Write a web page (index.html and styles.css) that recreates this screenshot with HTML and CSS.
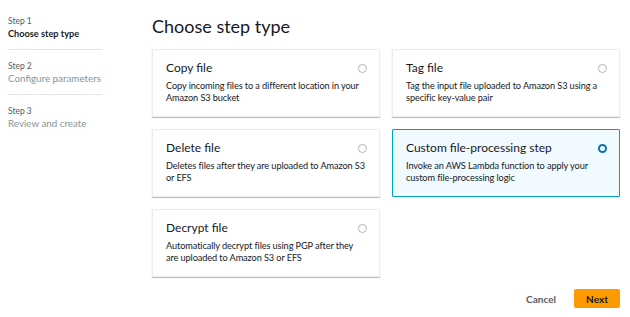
FILE: index.html
```html
<!DOCTYPE html>
<html lang="en">
<head>
    <meta charset="UTF-8">
    <meta name="viewport" content="width=device-width, initial-scale=1.0">
    <title>Choose step type</title>
    <link rel="stylesheet" href="styles.css">
</head>
<body>

    <div class="page">
        <div class="steps">
            <div class="step">
                <div class="step-label">Step 1</div>
                <div class="step-name active">Choose step type</div>
            </div>
            <div class="step">
                <div class="step-label">Step 2</div>
                <div class="step-name">Configure parameters</div>
            </div>
            <div class="step last">
                <div class="step-label">Step 3</div>
                <div class="step-name">Review and create</div>
            </div>
        </div>

        <div class="main">
            <h1>Choose step type</h1>
            <div class="tiles">
                <div class="tile">
                    <div class="tile-head">
                        <div class="tile-title">Copy file</div>
                        <span class="radio"></span>
                    </div>
                    <div class="tile-desc">Copy incoming files to a different location in your<br>Amazon S3 bucket</div>
                </div>
                <div class="tile">
                    <div class="tile-head">
                        <div class="tile-title">Tag file</div>
                        <span class="radio"></span>
                    </div>
                    <div class="tile-desc">Tag the input file uploaded to Amazon S3 using a<br>specific key-value pair</div>
                </div>
                <div class="tile">
                    <div class="tile-head">
                        <div class="tile-title">Delete file</div>
                        <span class="radio"></span>
                    </div>
                    <div class="tile-desc">Deletes files after they are uploaded to Amazon S3<br>or EFS</div>
                </div>
                <div class="tile selected">
                    <div class="tile-head">
                        <div class="tile-title">Custom file-processing step</div>
                        <span class="radio checked"></span>
                    </div>
                    <div class="tile-desc">Invoke an AWS Lambda function to apply your<br>custom file-processing logic</div>
                </div>
                <div class="tile">
                    <div class="tile-head">
                        <div class="tile-title">Decrypt file</div>
                        <span class="radio"></span>
                    </div>
                    <div class="tile-desc">Automatically decrypt files using PGP after they<br>are uploaded to Amazon S3 or EFS</div>
                </div>
            </div>

            <div class="actions">
                <button class="btn-link">Cancel</button>
                <button class="btn-primary">Next</button>
            </div>
        </div>
    </div>

</body>
</html>
```

FILE: styles.css
```css
* {
    box-sizing: border-box;
}

body {
    margin: 0;
    background-color: #fff;
    font-family: Lato, "Liberation Sans", sans-serif;
    color: #16191f;
}

.page {
    display: flex;
    padding: 0 10px 0 8px;
}

.steps {
    width: 94px;
    padding-top: 15px;
    flex-shrink: 0;
}

.step {
    padding-bottom: 9px;
    margin-bottom: 10px;
    border-bottom: 1px solid #e5e5e5;
}

.step.last {
    border-bottom: none;
}

.step-label {
    font-size: 8.5px;
    line-height: 12px;
    color: #545b64;
}

.step-name {
    font-size: 9.8px;
    line-height: 13px;
    color: #879596;
    white-space: nowrap;
}

.step-name.active {
    font-size: 9.2px;
    font-weight: bold;
    color: #16191f;
}

.main {
    flex: 1;
    margin-left: 50px;
}

h1 {
    margin: 12px 0 9px;
    font-size: 18px;
    line-height: 28px;
    font-weight: normal;
}

.tiles {
    display: grid;
    grid-template-columns: repeat(2, 1fr);
    grid-gap: 12px;
}

.tile {
    height: 68px;
    padding: 9px 12px 9px 13px;
    border: 1px solid #eaeded;
    border-radius: 1px;
    background-color: #fff;
    box-shadow: 0 1px 1px rgba(0, 28, 36, 0.3);
}

.tile.selected {
    background-color: #f1faff;
    border-color: #00a1c9;
    box-shadow: none;
}

.tile-head {
    display: flex;
    justify-content: space-between;
    align-items: center;
    margin-bottom: 3px;
}

.tile-title {
    font-size: 12px;
    line-height: 18px;
}

.tile-desc {
    font-size: 9.2px;
    line-height: 12px;
    letter-spacing: -0.1px;
    white-space: nowrap;
}

.radio {
    width: 9px;
    height: 9px;
    border: 1px solid #aab7b8;
    border-radius: 50%;
    background-color: #fff;
}

.radio.checked {
    border: 2.5px solid #0073bb;
}

.actions {
    display: flex;
    justify-content: flex-end;
    align-items: center;
    margin-top: 12px;
}

.btn-link {
    border: none;
    background: none;
    font-family: inherit;
    font-size: 10px;
    font-weight: bold;
    color: #545b64;
    margin-right: 12px;
}

.btn-primary {
    width: 46px;
    height: 19px;
    border: none;
    border-radius: 2px;
    background-color: #ff9900;
    font-family: inherit;
    font-size: 10px;
    font-weight: bold;
    color: #16191f;
}
```
